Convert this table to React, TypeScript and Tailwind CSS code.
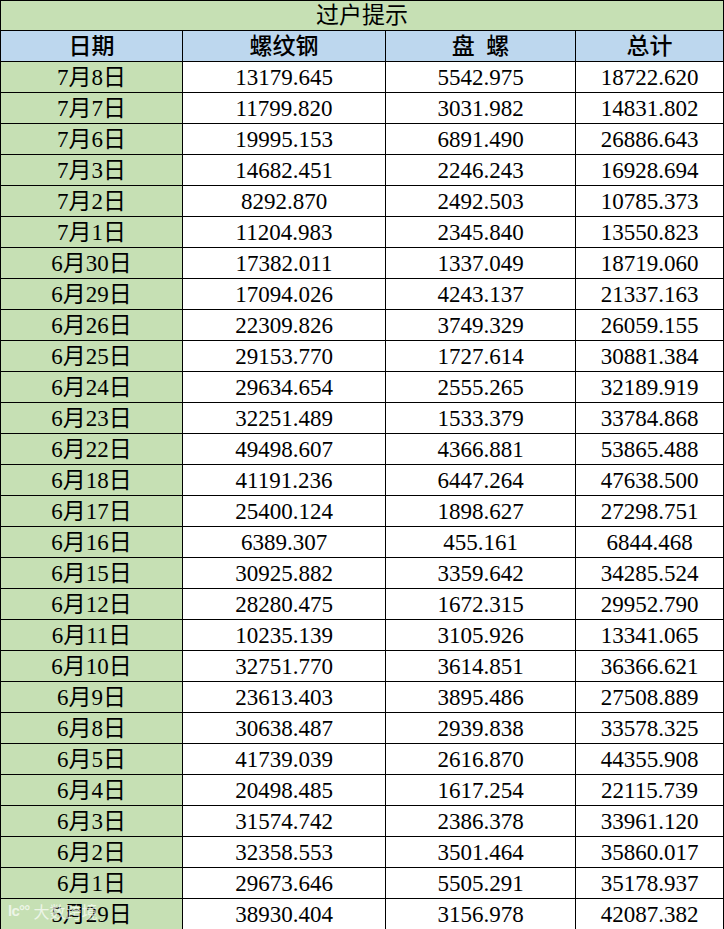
const rows: [string, string, string, string][] = [
  ["7月8日", "13179.645", "5542.975", "18722.620"],
  ["7月7日", "11799.820", "3031.982", "14831.802"],
  ["7月6日", "19995.153", "6891.490", "26886.643"],
  ["7月3日", "14682.451", "2246.243", "16928.694"],
  ["7月2日", "8292.870", "2492.503", "10785.373"],
  ["7月1日", "11204.983", "2345.840", "13550.823"],
  ["6月30日", "17382.011", "1337.049", "18719.060"],
  ["6月29日", "17094.026", "4243.137", "21337.163"],
  ["6月26日", "22309.826", "3749.329", "26059.155"],
  ["6月25日", "29153.770", "1727.614", "30881.384"],
  ["6月24日", "29634.654", "2555.265", "32189.919"],
  ["6月23日", "32251.489", "1533.379", "33784.868"],
  ["6月22日", "49498.607", "4366.881", "53865.488"],
  ["6月18日", "41191.236", "6447.264", "47638.500"],
  ["6月17日", "25400.124", "1898.627", "27298.751"],
  ["6月16日", "6389.307", "455.161", "6844.468"],
  ["6月15日", "30925.882", "3359.642", "34285.524"],
  ["6月12日", "28280.475", "1672.315", "29952.790"],
  ["6月11日", "10235.139", "3105.926", "13341.065"],
  ["6月10日", "32751.770", "3614.851", "36366.621"],
  ["6月9日", "23613.403", "3895.486", "27508.889"],
  ["6月8日", "30638.487", "2939.838", "33578.325"],
  ["6月5日", "41739.039", "2616.870", "44355.908"],
  ["6月4日", "20498.485", "1617.254", "22115.739"],
  ["6月3日", "31574.742", "2386.378", "33961.120"],
  ["6月2日", "32358.553", "3501.464", "35860.017"],
  ["6月1日", "29673.646", "5505.291", "35178.937"],
  ["5月29日", "38930.404", "3156.978", "42087.382"],
];

const cell = "border-[1.5px] border-black h-[31px] p-0 text-center align-middle leading-none";

export default function App() {
  return (
    <div
      className="relative w-[724px] h-[929px] overflow-hidden bg-white text-black text-[23px]"
      style={{ fontFamily: '"Liberation Serif", "Noto Sans CJK SC", serif' }}
    >
      <table className="w-[724px] table-fixed border-collapse">
        <colgroup>
          <col className="w-[182px]" />
          <col className="w-[203px]" />
          <col className="w-[190px]" />
          <col />
        </colgroup>
        <thead>
          <tr className="h-[30px]">
            <th colSpan={4} className="border-[1.5px] border-black h-[30px] p-0 text-center align-middle leading-[22px] bg-[#c6e0b4] font-normal text-[23px]">
              过户提示
            </th>
          </tr>
          <tr>
            <th className={`${cell} bg-[#bdd7ee] font-medium`}>日期</th>
            <th className={`${cell} bg-[#bdd7ee] font-medium`}>螺纹钢</th>
            <th className={`${cell} bg-[#bdd7ee] font-medium`}>盘&nbsp;&nbsp;螺</th>
            <th className={`${cell} bg-[#bdd7ee] font-medium`}>总计</th>
          </tr>
        </thead>
        <tbody>
          {rows.map((r) => (
            <tr key={r[0]}>
              <td className={`${cell} bg-[#c6e0b4]`}>{r[0]}</td>
              <td className={cell}>{r[1]}</td>
              <td className={cell}>{r[2]}</td>
              <td className={cell}>{r[3]}</td>
            </tr>
          ))}
        </tbody>
      </table>
      {/* watermark */}
      <div className="absolute left-[8px] bottom-[6px] flex items-center gap-[4px] text-white/70 text-[16px] pointer-events-none">
        <span className="text-[15px] font-bold tracking-tighter" style={{ fontFamily: '"Liberation Sans", sans-serif' }}>
          lc°°
        </span>
        <span style={{ fontFamily: '"Noto Sans CJK SC", sans-serif' }}>大数跨境</span>
      </div>
    </div>
  );
}
